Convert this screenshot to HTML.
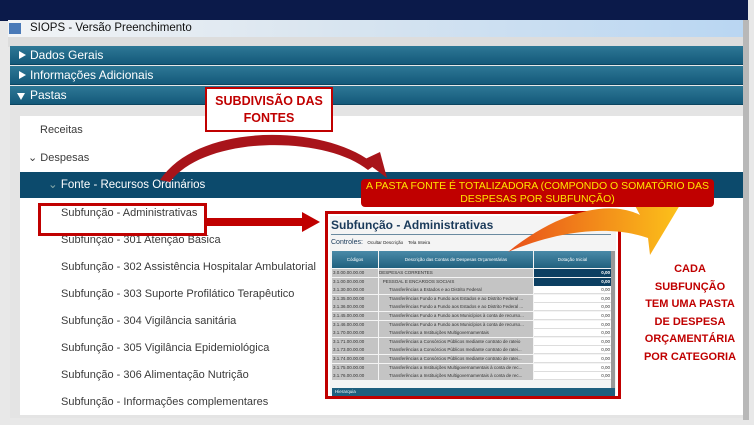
<!DOCTYPE html>
<html><head><meta charset="utf-8"><style>
*{margin:0;padding:0;box-sizing:border-box}
body{width:754px;height:425px;overflow:hidden;background:#e8e8e8;font-family:"Liberation Sans",sans-serif;position:relative}
.a{position:absolute}
.hdr{position:absolute;left:10px;width:733px;height:19px;background:linear-gradient(#2e7896,#14597a);color:#fff;font-size:12px;line-height:19px;padding-left:20px;border-bottom:1px solid #0c4560}
.hdr:before{content:"";position:absolute;left:9px;top:5px;border-left:7px solid #fff;border-top:4.5px solid transparent;border-bottom:4.5px solid transparent}
.hdr.o:before{left:7px;top:7px;border-top:7px solid #fff;border-left:4.5px solid transparent;border-right:4.5px solid transparent;border-bottom:0}
.it{position:absolute;left:61px;font-size:11px;color:#3a3a3a}
.row{position:absolute;left:332px;width:279px;height:8.6px;font-size:4.5px;line-height:8.6px;color:#333}
.row span{position:absolute;top:0;height:8px;background:#c4c4c4}
.cx{font-family:"Liberation Sans",sans-serif;font-weight:bold;color:#c00000}
</style></head><body>
<div class="a" style="left:0;top:0;width:748px;height:21px;background:#0b1a4a"></div>
<div class="a" style="left:8px;top:20px;width:736px;height:17px;background:linear-gradient(90deg,#f2f4f6 0%,#dbe6f0 40%,#b9d6f2 100%);font-size:11.5px;line-height:17px;padding-left:22px;color:#111">SIOPS - Versão Preenchimento</div>
<div class="a" style="left:9px;top:23px;width:12px;height:11px;background:#4a7ab8"></div>
<div class="a" style="left:8px;top:37px;width:736px;height:10px;background:#ddd"></div>
<div class="hdr" style="top:46px">Dados Gerais</div>
<div class="hdr" style="top:66px">Informações Adicionais</div>
<div class="hdr o" style="top:86px">Pastas</div>
<div class="a" style="left:10px;top:106px;width:733px;height:312px;background:#e4e4e4"></div>
<div class="a" style="left:20px;top:116px;width:723px;height:299px;background:#fff"></div>
<div class="a" style="left:743px;top:20px;width:6px;height:400px;background:#b8b8b8"></div>
<div class="it" style="left:40px;top:124px">Receitas</div>
<div class="it" style="left:28px;top:151px">&#x2304; Despesas</div>
<div class="a" style="left:20px;top:172px;width:723px;height:26px;background:#0c4a6c;color:#fff;font-size:11.5px;line-height:26px;padding-left:28px"><span style="color:#8aa">&#x2304;</span> Fonte - Recursos Ordinários</div>
<div class="it" style="top:207px">Subfunção - Administrativas</div>
<div class="it" style="top:234px">Subfunção - 301 Atenção Básica</div>
<div class="it" style="top:261px">Subfunção - 302 Assistência Hospitalar Ambulatorial</div>
<div class="it" style="top:288px">Subfunção - 303 Suporte Profilático Terapêutico</div>
<div class="it" style="top:315px">Subfunção - 304 Vigilância sanitária</div>
<div class="it" style="top:342px">Subfunção - 305 Vigilância Epidemiológica</div>
<div class="it" style="top:369px">Subfunção - 306 Alimentação Nutrição</div>
<div class="it" style="top:396px">Subfunção - Informações complementares</div>
<div class="a" style="left:38px;top:203px;width:169px;height:33px;border:3px solid #c00000"></div>

<div class="a" style="left:325px;top:211px;width:296px;height:188px;border:3px solid #c00000;background:#fff">
<div class="a" style="left:2px;top:2px;width:286px;height:178px;background:#f4f4f4"></div>
</div>
<div class="a" style="left:331px;top:218px;font-size:12px;font-weight:bold;color:#1a3a5a">Subfunção - Administrativas</div>
<div class="a" style="left:331px;top:234px;width:280px;height:1px;background:#6a8aa0"></div>
<div class="a" style="left:331px;top:239px;font-size:7px;color:#1a3a5a">Controles: <span style="font-size:4.5px;color:#222">&nbsp;&nbsp;Ocultar Descrição &nbsp;&nbsp;&nbsp;Tela Inteira</span></div>
<div class="a" style="left:332px;top:251px;width:46px;height:17px;background:linear-gradient(#4a8aa8,#20607e);color:#fff;font-size:4.5px;text-align:center;line-height:17px">Códigos</div>
<div class="a" style="left:379px;top:251px;width:154px;height:17px;background:linear-gradient(#4a8aa8,#20607e);color:#fff;font-size:4.5px;text-align:center;line-height:17px">Descrição das Contas de Despesas Orçamentárias</div>
<div class="a" style="left:534px;top:251px;width:77px;height:17px;background:linear-gradient(#4a8aa8,#20607e);color:#fff;font-size:4.5px;text-align:center;line-height:17px">Dotação Inicial</div>
<div class="a" style="left:611px;top:251px;width:4px;height:140px;background:#999"></div>
<div id="rows"></div>
<div class="a" style="left:332px;top:388px;width:283px;height:8px;background:#1f5f7e;color:#fff;font-size:4.5px;line-height:8px;padding-left:3px">Hierarquia</div>
<script>
var d=[["3.0.00.00.00.00","DESPESAS CORRENTES",1],["3.1.00.00.00.00","&nbsp;&nbsp;&nbsp;PESSOAL E ENCARGOS SOCIAIS",1],["3.1.30.00.00.00","Transferências a Estados e ao Distrito Federal"],["3.1.35.00.00.00","Transferências Fundo a Fundo aos Estados e ao Distrito Federal ..."],["3.1.36.00.00.00","Transferências Fundo a Fundo aos Estados e ao Distrito Federal ..."],["3.1.45.00.00.00","Transferências Fundo a Fundo aos Municípios à conta de recurso..."],["3.1.46.00.00.00","Transferências Fundo a Fundo aos Municípios à conta de recurso..."],["3.1.70.00.00.00","Transferências a Instituições Multigovernamentais"],["3.1.71.00.00.00","Transferências a Consórcios Públicos mediante contrato de rateio"],["3.1.73.00.00.00","Transferências a Consórcios Públicos mediante contrato de ratei..."],["3.1.74.00.00.00","Transferências a Consórcios Públicos mediante contrato de ratei..."],["3.1.75.00.00.00","Transferências a Instituições Multigovernamentais à conta de rec..."],["3.1.76.00.00.00","Transferências a Instituições Multigovernamentais à conta de rec..."]];
var h="";d.forEach(function(r,i){var t=269+i*8.6;var p=i<2?0:10;h+='<div class="row" style="top:'+t+'px"><span style="left:0;width:46px;padding-left:1px">'+r[0]+'</span><span style="left:47px;width:154px;padding-left:'+p+'px">'+r[1]+'</span><span style="left:202px;width:77px;text-align:right;padding-right:1px;'+(r[2]?'background:#0c3f62;color:#fff;font-weight:bold':'background:#fff;border-bottom:1px solid #ddd')+'">0,00</span></div>'});document.getElementById("rows").innerHTML=h;
</script>

<svg class="a" style="left:0;top:0" width="754" height="425">
<defs><linearGradient id="og" x1="0" y1="0" x2="1" y2="0"><stop offset="0" stop-color="#e8501a"/><stop offset="1" stop-color="#fcc21a"/></linearGradient></defs>
<path d="M160 180 C200 120 330 125 375 165 L368 170 C325 135 205 135 170 182 Z" fill="#a8141a"/>
<path d="M363 160 L387 178 L380 152 Z" fill="#a8141a"/>
<rect x="207" y="218" width="96" height="8" fill="#c00000"/>
<path d="M302 212 L320 222 L302 232 Z" fill="#c00000"/>
<path d="M508 252 C560 210 610 200 640 215 L632 200 L680 205 L650 255 L648 238 C610 225 560 230 508 252 Z" fill="url(#og)"/>
</svg>

<div class="a" style="left:205px;top:87px;width:128px;height:45px;background:#fff;border:2px solid #c00000;text-align:center;font-size:12.5px;line-height:17px;padding-top:4px" ><span class="cx">SUBDIVISÃO DAS<br>FONTES</span></div>
<div class="a" style="left:361px;top:179px;width:353px;height:28px;background:#c00000;border-radius:4px;text-align:center;color:#ffe600;font-size:10.5px;line-height:13px;padding-top:1px">A PASTA FONTE É TOTALIZADORA (COMPONDO O SOMATÓRIO DAS<br>DESPESAS POR SUBFUNÇÃO)</div>
<div class="a cx" style="left:630px;top:261px;width:120px;text-align:center;font-size:11px;line-height:17.6px">CADA<br>SUBFUNÇÃO<br>TEM UMA PASTA<br>DE DESPESA<br>ORÇAMENTÁRIA<br>POR CATEGORIA</div>
</body></html>
